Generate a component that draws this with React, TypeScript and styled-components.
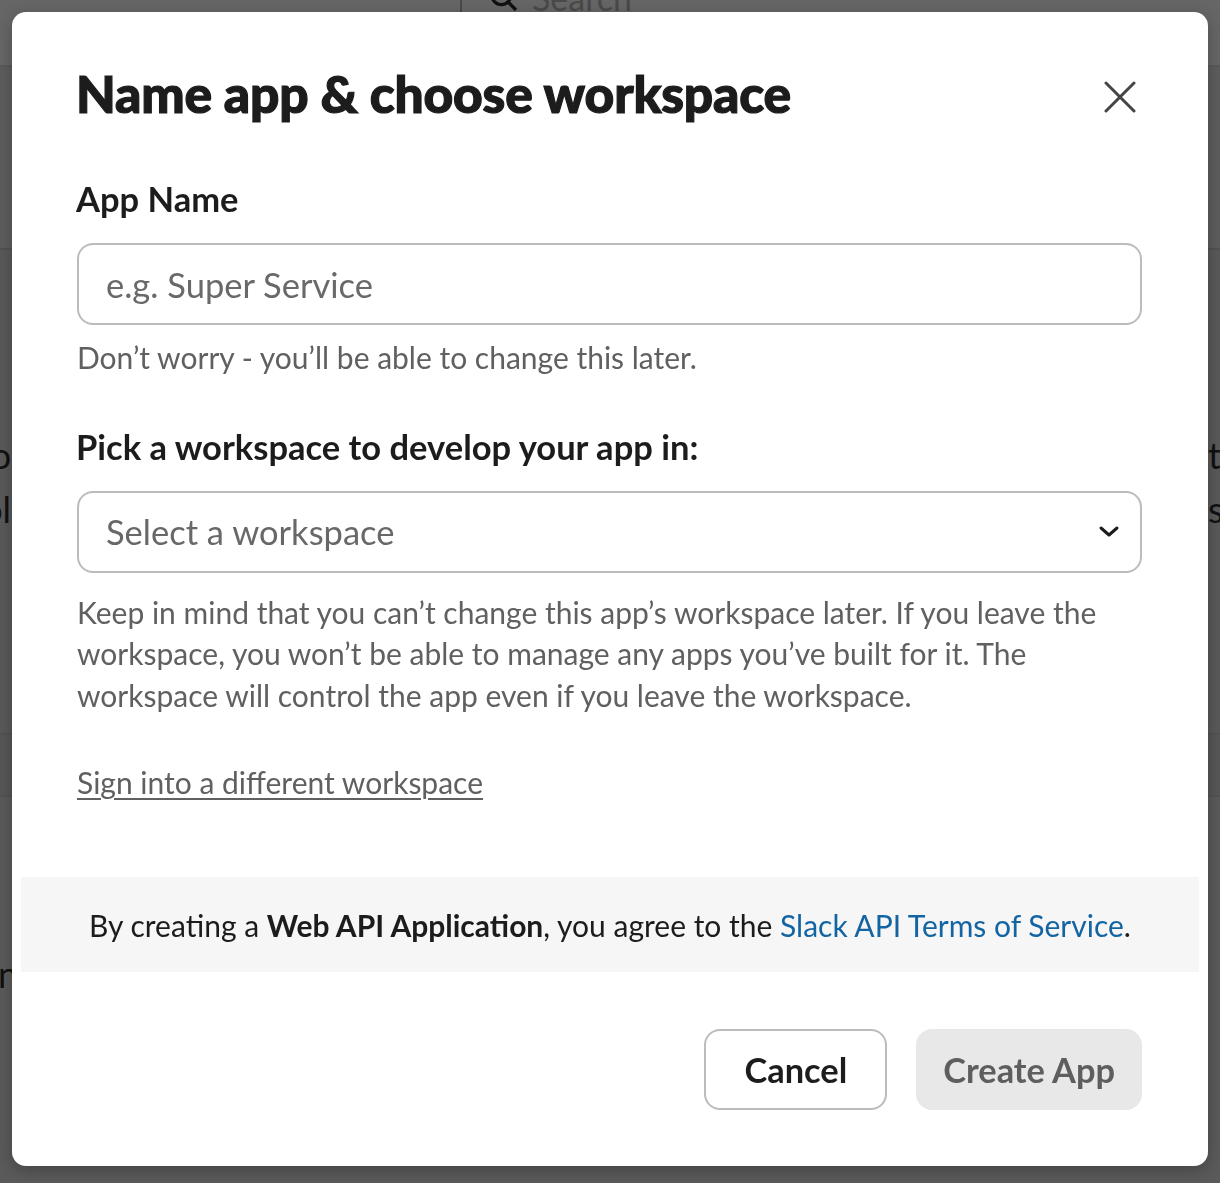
import React from "react";
import styled, { createGlobalStyle } from "styled-components";

const Global = createGlobalStyle`
  * { box-sizing: border-box; }
  html, body { margin: 0; padding: 0; }
  body {
    width: 1220px;
    height: 1183px;
    overflow: hidden;
    font-family: Lato, "Noto Sans", sans-serif;
    background: #5c5c5c;
  }
`;

const Page = styled.div`
  width: 1220px;
  height: 1183px;
  display: flex;
  flex-direction: column;
  background: #5c5c5c;
  color: #0e0e0e;
  font-family: Lato, "Noto Sans", sans-serif;
`;

const TopBar = styled.div`
  height: 67px;
  flex: 0 0 67px;
  background: #666666;
  border-bottom: 2px solid #595959;
  display: flex;
  align-items: flex-start;
  padding-left: 460px;
`;

const SearchBox = styled.div`
  height: 67px;
  width: 500px;
  border-left: 2px solid #4a4a4a;
  display: flex;
  align-items: center;
  gap: 12px;
  padding-left: 26px;
  margin-top: -36px;
  color: #4a4a4a;
  font-size: 34px;
`;

const Band = styled.div<{ $h: number; $bg: string }>`
  height: ${(p) => p.$h}px;
  flex: 0 0 ${(p) => p.$h}px;
  background: ${(p) => p.$bg};
  border-bottom: 2px solid #525252;
  display: flex;
  flex-direction: column;
  justify-content: flex-start;
`;

const PeekRow = styled.div<{ $top: number }>`
  margin-top: ${(p) => p.$top}px;
  display: flex;
  justify-content: space-between;
  font-size: 36px;
  line-height: 54px;
  color: #111111;
`;

const PeekLeft = styled.div<{ $shift: number }>`
  margin-left: ${(p) => -p.$shift}px;
  text-align: right;
`;

const PeekRight = styled.div`
  margin-right: -60px;
  width: 72px;
`;

const Overlay = styled.div`
  position: fixed;
  inset: 0;
  display: flex;
  justify-content: center;
  align-items: flex-start;
  padding-top: 12px;
`;

const Modal = styled.div`
  width: 1196px;
  height: 1154px;
  background: #ffffff;
  border-radius: 14px;
  box-shadow: 0 4px 16px rgba(0, 0, 0, 0.25);
  display: flex;
  flex-direction: column;
  color: #1d1c1d;
  overflow: hidden;
`;

const Header = styled.div`
  display: flex;
  align-items: center;
  justify-content: space-between;
  padding: 46px 72px 0 64px;
`;

const Title = styled.h1`
  margin: 0;
  font-size: 51.5px;
  font-weight: 900;
  line-height: 70px;
  letter-spacing: -0.2px;
  -webkit-text-stroke: 1.2px #1d1c1d;
`;

const CloseButton = styled.button`
  width: 32px;
  height: 32px;
  border: none;
  background: transparent;
  padding: 0;
  display: flex;
  align-items: center;
  justify-content: center;
  margin-top: 8px;
  cursor: pointer;
`;

const Body = styled.div`
  display: flex;
  flex-direction: column;
  padding: 0 66px 0 65px;
`;

const Label = styled.label<{ $top: number }>`
  display: block;
  margin-top: ${(p) => p.$top}px;
  margin-left: -1px;
  font-size: 34.5px;
  font-weight: 700;
  line-height: 44px;
`;

const Field = styled.div`
  margin-top: 22px;
  height: 82px;
  border: 2px solid #bcbcbc;
  border-radius: 16px;
  display: flex;
  align-items: center;
  justify-content: space-between;
  padding: 0 19px 0 27px;
  font-size: 34.5px;
  color: #696869;
`;

const Input = styled.input`
  border: none;
  outline: none;
  background: transparent;
  width: 100%;
  font-family: inherit;
  font-size: 34.5px;
  color: #1d1c1d;
  padding: 0;
  &::placeholder { color: #6a696a; }
`;

const Help = styled.p<{ $top: number }>`
  margin: ${(p) => p.$top}px 0 0;
  font-size: 30px;
  line-height: 41.5px;
  color: #616061;
`;

const SignLink = styled.a`
  display: inline-block;
  margin-top: 46px;
  font-size: 30px;
  line-height: 40px;
  color: #616061;
  text-decoration: underline;
  text-underline-offset: 4px;
  text-decoration-thickness: 2px;
  align-self: flex-start;
`;

const Terms = styled.div`
  margin: 75px 9px 0;
  height: 95px;
  background: #f6f6f6;
  display: flex;
  align-items: center;
  justify-content: center;
  font-size: 30px;
  color: #1d1c1d;
`;

const Strong = styled.b`
  font-weight: 700;
`;

const TermsLink = styled.a`
  color: #1264a3;
  text-decoration: none;
`;

const Footer = styled.div`
  display: flex;
  justify-content: flex-end;
  gap: 29px;
  padding: 57px 66px 0 0;
`;

const Button = styled.button<{ $primary?: boolean }>`
  height: 81px;
  padding: 0 ${(p) => (p.$primary ? 25 : 38)}px;
  border-radius: 16px;
  font-family: inherit;
  font-size: 34.4px;
  font-weight: 700;
  border: 2px solid ${(p) => (p.$primary ? "#e8e8e8" : "#bcbcbc")};
  background: ${(p) => (p.$primary ? "#e8e8e8" : "#ffffff")};
  color: ${(p) => (p.$primary ? "#5f5e5f" : "#1d1c1d")};
  cursor: pointer;
`;

export default function App() {
  return (
    <>
      <Global />
      <Page>
        <TopBar>
          <SearchBox>
            <svg width="32" height="32" viewBox="0 0 24 24" fill="none" stroke="#111" strokeWidth="2.5">
              <circle cx="10" cy="10" r="7" />
              <path d="M15 15l6 6" />
            </svg>
            Search
          </SearchBox>
        </TopBar>
        <Band $h={183} $bg="#5d5d5d" />
        <Band $h={485} $bg="#595959">
          <PeekRow $top={178}>
            <PeekLeft $shift={38}>
              to
              <br />
              bol
            </PeekLeft>
            <PeekRight>
              t
              <br />
              s
            </PeekRight>
          </PeekRow>
        </Band>
        <Band $h={62} $bg="#575757" />
        <Band $h={400} $bg="#5a5a5a">
          <PeekRow $top={150}>
            <PeekLeft $shift={22}>un</PeekLeft>
            <PeekRight />
          </PeekRow>
        </Band>
      </Page>
      <Overlay>
        <Modal role="dialog" aria-label="Name app & choose workspace">
          <Header>
            <Title>Name app &amp; choose workspace</Title>
            <CloseButton aria-label="Close">
              <svg width="32" height="32" viewBox="0 0 32 32" fill="none" stroke="#454445" strokeWidth="3" strokeLinecap="round">
                <path d="M2 2L30 30M30 2L2 30" />
              </svg>
            </CloseButton>
          </Header>
          <Body>
            <Label $top={49}>App Name</Label>
            <Field>
              <Input placeholder="e.g. Super Service" />
            </Field>
            <Help $top={12}>Don’t worry - you’ll be able to change this later.</Help>
            <Label $top={46}>Pick a workspace to develop your app in:</Label>
            <Field>
              <span>Select a workspace</span>
              <svg width="24" height="24" viewBox="0 0 24 24" fill="none" stroke="#1d1c1d" strokeWidth="3" strokeLinecap="round" strokeLinejoin="round">
                <path d="M4 8l8 7 8-7" />
              </svg>
            </Field>
            <Help $top={19}>
              Keep in mind that you can’t change this app’s workspace later. If you leave the workspace, you won’t be able
              to manage any apps you’ve built for it. The workspace will control the app even if you leave the workspace.
            </Help>
            <SignLink href="#">Sign into a different workspace</SignLink>
          </Body>
          <Terms>
            <span>
              By creating a <Strong>Web API Application</Strong>, you agree to the{" "}
              <TermsLink href="#">Slack API Terms of Service</TermsLink>.
            </span>
          </Terms>
          <Footer>
            <Button>Cancel</Button>
            <Button $primary>Create App</Button>
          </Footer>
        </Modal>
      </Overlay>
    </>
  );
}
